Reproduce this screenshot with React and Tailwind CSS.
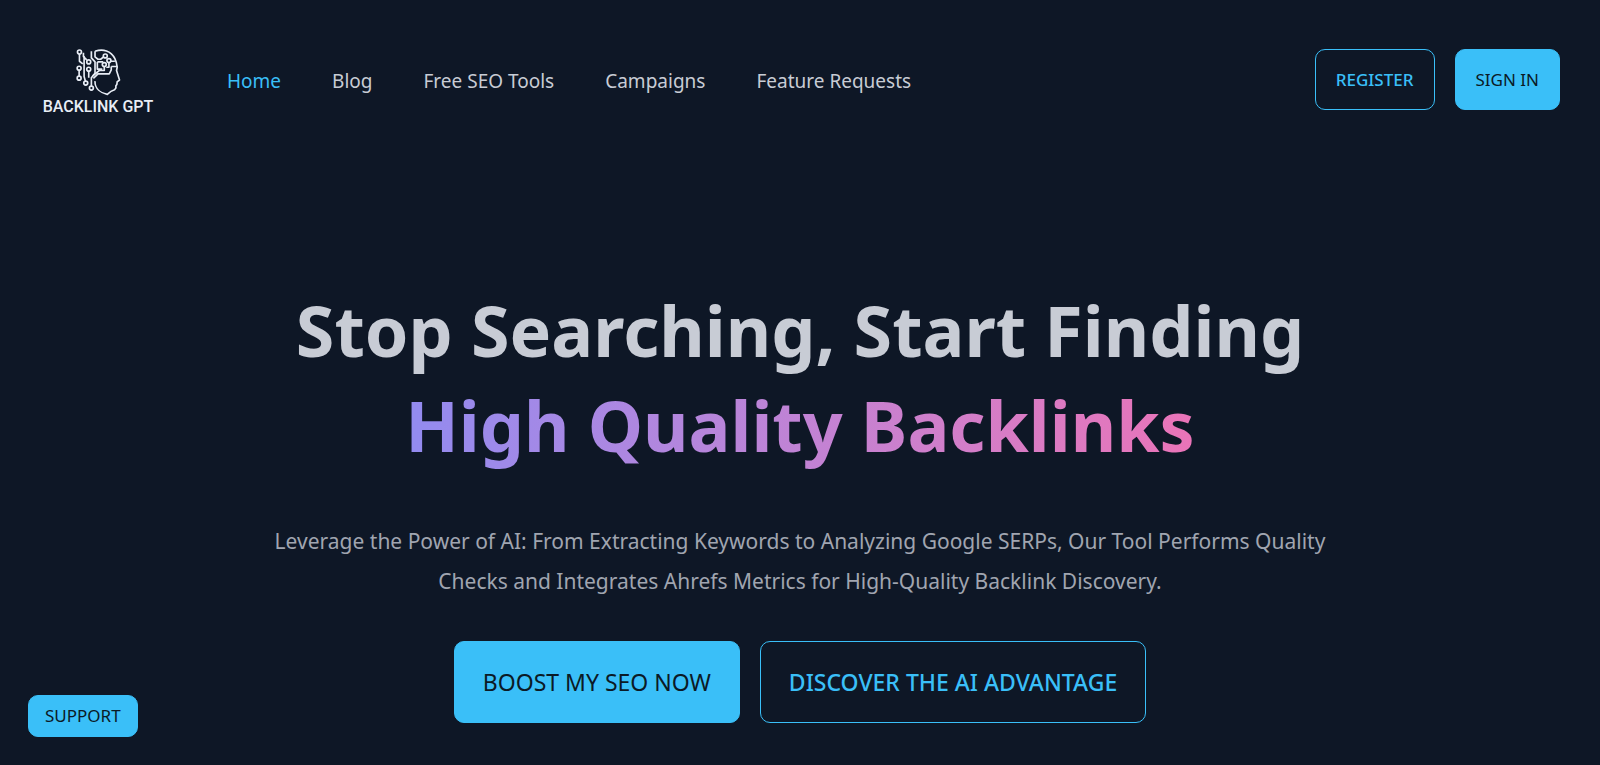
const NAV = ["Home", "Blog", "Free SEO Tools", "Campaigns", "Feature Requests"];

function LogoMark() {
  return (
    <svg viewBox="0 0 144 148" className="h-[49px] w-12" fill="none" stroke="#e8edf5" strokeWidth="5" strokeLinejoin="round" aria-hidden="true">
      <circle cx="16" cy="12" r="6" />
      <circle cx="44" cy="42" r="6" />
      <circle cx="15" cy="61" r="6" />
      <circle cx="15" cy="91" r="6" />
      <circle cx="44" cy="64" r="6" />
      <circle cx="35" cy="106" r="6" />
      <circle cx="52" cy="121" r="6" />
      <circle cx="94" cy="24" r="6" />
      <circle cx="105" cy="38" r="6" />
      <circle cx="91" cy="50" r="6" />
      <path d="M16 18v22l10 8M15 67v18M28 14v12l10 10M30 24v62l4 14M44 70v20M52 10v20l11 12v34L52 90v25" />
      <path d="M63 10v17l9 7h8l9-7M63 10c24-8 48-2 60 22 4 8 6 16 7 26l-2 10 9 29-7 5-1 8-3 4v7l-4 5c-8 2-14 6-22 14-18-4-38-16-37-40" />
      <path d="M70 42v22h15M70 42h18M91 56v12H76l-20 16M111 40h12M105 44v14h-8M112 56h18M112 56v10l-6 12H72L58 92" />
    </svg>
  );
}

export default function App() {
  return (
    <div className="flex min-h-screen flex-col bg-[#0e1726] font-['Noto_Sans',sans-serif] text-[#c8ccd5]">
      <header className="flex items-start justify-between px-10 pt-12">
        <div className="flex items-center gap-[75px]">
          <a href="#" className="flex w-28 flex-col items-center pl-1">
            <LogoMark />
            <span className="whitespace-nowrap font-[Roboto,sans-serif] text-[16px] leading-5 font-medium text-[#e8edf5]">BACKLINK GPT</span>
          </a>
          <nav className="flex gap-[51px] pb-1 text-[19px] leading-8">
            {NAV.map((label, i) => (
              <a key={label} href="#" className={i === 0 ? "text-[#3abff8]" : ""}>{label}</a>
            ))}
          </nav>
        </div>
        <div className="mt-px flex gap-5 text-[17px]">
          <button className="h-[61px] rounded-[10px] border border-[#3abff8] px-5 font-medium text-[#3abff8]">REGISTER</button>
          <button className="h-[61px] rounded-[10px] border border-[#3abff8] bg-[#3abff8] px-5 text-[#0b1a26]">SIGN IN</button>
        </div>
      </header>

      <main className="flex flex-col items-center px-10 pt-[166px] text-center">
        <h1 className="text-[70px] leading-[95px] font-bold">
          Stop Searching, Start Finding
          <br />
          <span className="inline-block bg-linear-to-r from-[#928bf0] to-[#ea74b8] bg-clip-text text-transparent">High Quality Backlinks</span>
        </h1>
        <p className="mt-12 max-w-[1100px] text-[21px] leading-10 text-[#a0a5b0]">
          Leverage the Power of AI: From Extracting Keywords to Analyzing Google SERPs, Our Tool Performs Quality Checks and Integrates Ahrefs Metrics for High-Quality Backlink Discovery.
        </p>
        <div className="mt-10 flex gap-5 text-[23px]">
          <button className="h-[82px] rounded-[10px] border border-[#3abff8] bg-[#3abff8] px-7 text-[#0b1a26]">BOOST MY SEO NOW</button>
          <button className="h-[82px] rounded-[10px] border border-[#3abff8] px-7 font-medium text-[#3abff8]">DISCOVER THE AI ADVANTAGE</button>
        </div>
      </main>

      <button className="fixed bottom-7 left-7 h-[42px] rounded-[10px] border border-[#3abff8] bg-[#3abff8] px-4 text-[17px] text-[#0b1a26]">SUPPORT</button>
    </div>
  );
}
